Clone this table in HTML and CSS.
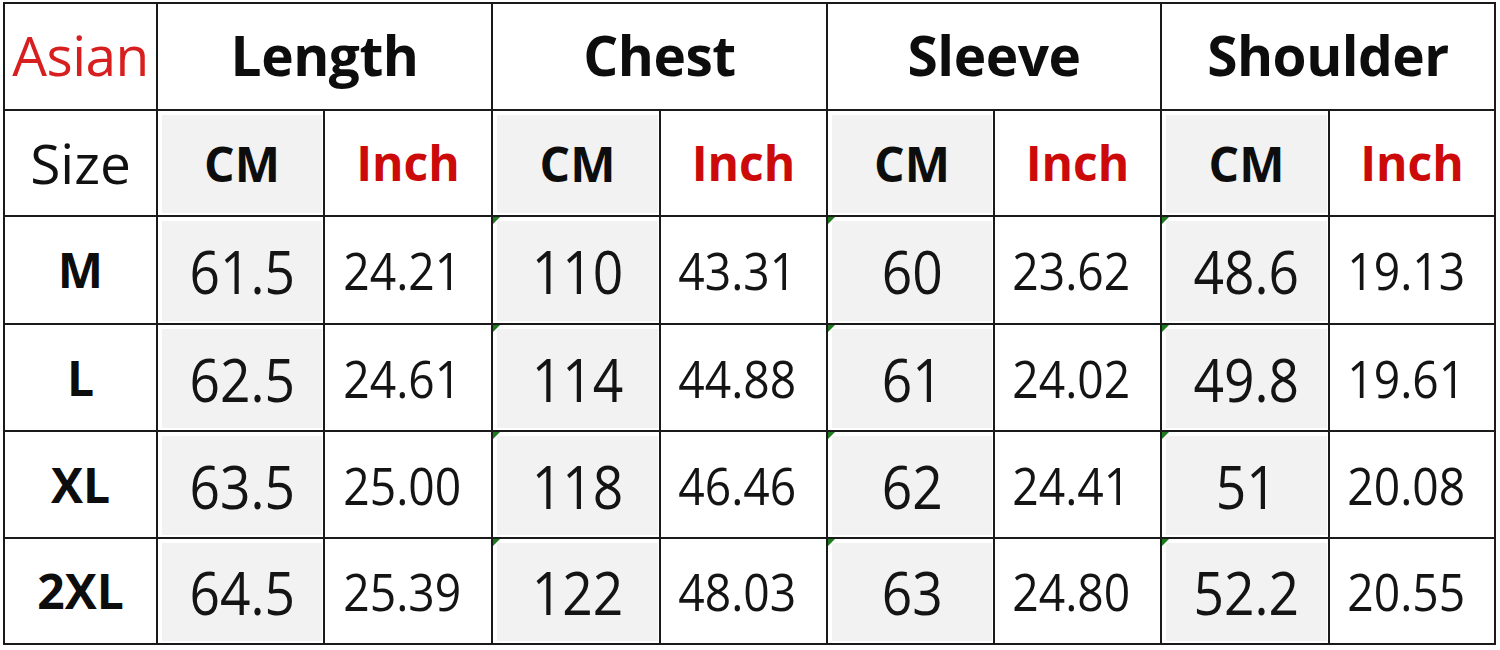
FILE: index.html
```html
<!DOCTYPE html>
<html lang="en">
<head>
<meta charset="utf-8">
<title>Size Chart</title>
<link rel="stylesheet" href="styles.css">
</head>
<body>
<div class="chart">
  <div class="cell asian">Asian</div>
  <div class="cell head span2">Length</div>
  <div class="cell head span2">Chest</div>
  <div class="cell head span2">Sleeve</div>
  <div class="cell head span2">Shoulder</div>

  <div class="cell size-label">Size</div>
  <div class="cell cm unit">CM</div><div class="cell unit red">Inch</div>
  <div class="cell cm unit">CM</div><div class="cell unit red">Inch</div>
  <div class="cell cm unit">CM</div><div class="cell unit red">Inch</div>
  <div class="cell cm unit">CM</div><div class="cell unit red">Inch</div>

  <div class="cell size">M</div>
  <div class="cell cm val"><span class="num">61.5</span></div><div class="cell inch"><span class="num">24.21</span></div>
  <div class="cell cm val mark"><span class="num">110</span></div><div class="cell inch"><span class="num">43.31</span></div>
  <div class="cell cm val mark"><span class="num">60</span></div><div class="cell inch"><span class="num">23.62</span></div>
  <div class="cell cm val mark"><span class="num">48.6</span></div><div class="cell inch"><span class="num">19.13</span></div>

  <div class="cell size">L</div>
  <div class="cell cm val"><span class="num">62.5</span></div><div class="cell inch"><span class="num">24.61</span></div>
  <div class="cell cm val mark"><span class="num">114</span></div><div class="cell inch"><span class="num">44.88</span></div>
  <div class="cell cm val mark"><span class="num">61</span></div><div class="cell inch"><span class="num">24.02</span></div>
  <div class="cell cm val mark"><span class="num">49.8</span></div><div class="cell inch"><span class="num">19.61</span></div>

  <div class="cell size">XL</div>
  <div class="cell cm val"><span class="num">63.5</span></div><div class="cell inch"><span class="num">25.00</span></div>
  <div class="cell cm val mark"><span class="num">118</span></div><div class="cell inch"><span class="num">46.46</span></div>
  <div class="cell cm val mark"><span class="num">62</span></div><div class="cell inch"><span class="num">24.41</span></div>
  <div class="cell cm val mark"><span class="num">51</span></div><div class="cell inch"><span class="num">20.08</span></div>

  <div class="cell size">2XL</div>
  <div class="cell cm val"><span class="num">64.5</span></div><div class="cell inch"><span class="num">25.39</span></div>
  <div class="cell cm val mark"><span class="num">122</span></div><div class="cell inch"><span class="num">48.03</span></div>
  <div class="cell cm val mark"><span class="num">63</span></div><div class="cell inch"><span class="num">24.80</span></div>
  <div class="cell cm val mark"><span class="num">52.2</span></div><div class="cell inch"><span class="num">20.55</span></div>
</div>
</body>
</html>
```

FILE: styles.css
```css
html, body {
  margin: 0;
  padding: 0;
  background: #ffffff;
}

body {
  padding: 2px 0 0 3px;
  font-family: "Open Sans", "Noto Sans", sans-serif;
  color: #111111;
}

.chart {
  display: grid;
  width: 1493px;
  box-sizing: border-box;
  grid-template-columns: 151px 165px 166px 166px 165px 165px 165px 166px 164px;
  grid-template-rows: 105px 104px 106px 105px 105px 104px;
  gap: 2px;
  padding: 2px;
  background: #1a1a1a;
}

.cell {
  background: #ffffff;
  display: flex;
  align-items: center;
  justify-content: center;
  line-height: 1;
  white-space: nowrap;
  position: relative;
}

.span2 {
  grid-column: span 2;
}

.asian {
  color: #d81f1f;
  font-size: 55px;
  font-weight: 400;
  letter-spacing: -0.5px;
  padding-bottom: 5px;
}

.head {
  font-size: 55px;
  font-weight: 700;
  color: #0d0d0d;
  letter-spacing: -0.5px;
  padding-bottom: 5px;
}

.size-label {
  font-size: 55px;
  font-weight: 400;
  color: #111111;
  padding-bottom: 2px;
}

.unit {
  font-size: 48px;
  font-weight: 700;
  color: #0d0d0d;
}

.unit.red {
  color: #cc0a0a;
}

.cm {
  background: #f2f2f2;
  border-style: solid;
  border-color: #ffffff;
  border-width: 4px 1px 2px 4px;
}

.size {
  font-size: 48px;
  font-weight: 700;
  color: #0d0d0d;
}

.val {
  font-size: 60px;
  font-weight: 400;
}

.inch {
  font-size: 52px;
  font-weight: 400;
  padding-right: 12px;
}

.num {
  display: inline-block;
  transform: scaleX(0.89);
  color: #141414;
}

.mark::before {
  content: "";
  position: absolute;
  top: -4px;
  left: -4px;
  width: 0;
  height: 0;
  border-top: 7px solid #1e7a1e;
  border-right: 7px solid transparent;
}
```
